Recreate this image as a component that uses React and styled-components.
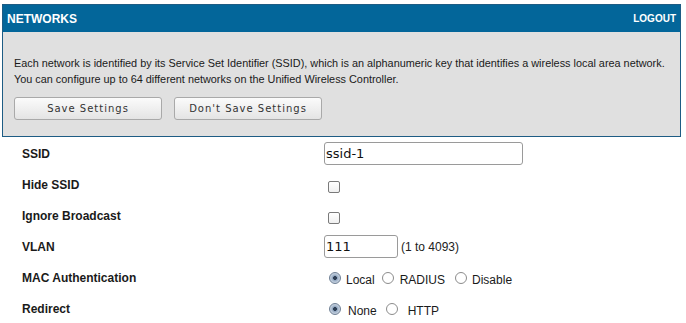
import React from 'react';
import styled, { createGlobalStyle } from 'styled-components';

const GlobalStyle = createGlobalStyle`
  body {
    margin: 0;
    background: #ffffff;
    font-family: "Liberation Sans", Arial, sans-serif;
    color: #1e1e1e;
  }
`;

const Page = styled.div`
  width: 686px;
  padding: 4px 5px 0 2px;
  box-sizing: border-box;
`;

const Panel = styled.section`
  border: 1px solid #1d5c84;
  background: #e0e0e0;
`;

const PanelHeader = styled.header`
  height: 27px;
  background: #03669a;
  color: #ffffff;
  display: flex;
  align-items: center;
  justify-content: space-between;
  padding: 0 4px 0 4px;
  font-weight: bold;
`;

const PanelTitle = styled.h1`
  margin: 0;
  font-size: 12px;
  font-weight: bold;
`;

const Logout = styled.a`
  font-size: 10px;
  color: #ffffff;
  text-decoration: none;
`;

const PanelBody = styled.div`
  padding: 23px 11px 16px 11px;
`;

const Intro = styled.p`
  margin: 0 0 10px 0;
  font-size: 10.87px;
  line-height: 16px;
  white-space: nowrap;
  color: #1a1a1a;
`;

const Buttons = styled.div`
  display: flex;
  gap: 12px;
`;

const Button = styled.button`
  width: 148px;
  height: 23px;
  border: 1px solid #a9a9a9;
  border-radius: 3px;
  background: linear-gradient(#fbfbfb, #e4e4e4);
  font-family: "DejaVu Sans", Verdana, sans-serif;
  font-size: 10px;
  letter-spacing: 1px;
  color: #333333;
  padding: 0;
`;

const Form = styled.div`
  display: grid;
  grid-template-columns: 302px 1fr;
  grid-auto-rows: 31px;
  padding: 1px 0 0 20px;
`;

const Label = styled.div`
  display: flex;
  align-items: center;
  font-size: 12px;
  font-weight: bold;
  color: #1a1a1a;
`;

const Control = styled.div`
  display: flex;
  align-items: center;
  font-size: 12px;
`;

const TextInput = styled.input`
  width: ${p => p.$width}px;
  height: 23px;
  box-sizing: border-box;
  margin: 0;
  padding: 0 1px;
  border: 1px solid #9a9a9a;
  border-radius: 3px;
  font-family: "DejaVu Sans", Verdana, sans-serif;
  font-size: 13px;
  color: #111111;
  background: #ffffff;
  outline: none;
`;

const Hint = styled.span`
  margin-left: 3px;
  font-size: 12px;
  color: #222222;
`;

const Checkbox = styled.input.attrs({ type: 'checkbox' })`
  appearance: none;
  width: 12px;
  height: 12px;
  margin: 4px 0 0 4px;
  border: 1px solid #7a7a7a;
  border-radius: 2px;
  background: linear-gradient(#ffffff, #f0f0f0);
`;

const RadioGroup = styled.div`
  display: flex;
  align-items: center;
  padding-left: 5px;
`;

const Option = styled.label`
  display: flex;
  align-items: center;
  font-size: 12px;
  color: #1a1a1a;
  gap: ${p => p.$gap}px;
  margin-left: ${p => p.$offset || 0}px;
`;

const OptionText = styled.span`
  margin-top: 4px;
`;

const Radio = styled.input.attrs({ type: 'radio' })`
  appearance: none;
  width: 12px;
  height: 12px;
  margin: 0;
  border-radius: 50%;
  border: 1px solid #8c8c8c;
  background: #ffffff;
  &:checked {
    border-color: #6e7f94;
    background: radial-gradient(circle, #2f3f55 0 1.6px, #8ea3bd 2.2px, #b9c7d8 4px, #d6dee8 6px);
  }
`;

export default function App() {
  return (
    <>
      <GlobalStyle />
      <Page>
        <Panel>
          <PanelHeader>
            <PanelTitle>NETWORKS</PanelTitle>
            <Logout href="#">LOGOUT</Logout>
          </PanelHeader>
          <PanelBody>
            <Intro>
              Each network is identified by its Service Set Identifier (SSID), which is an alphanumeric key that identifies a wireless local area network.
              <br />
              You can configure up to 64 different networks on the Unified Wireless Controller.
            </Intro>
            <Buttons>
              <Button>Save Settings</Button>
              <Button>Don't Save Settings</Button>
            </Buttons>
          </PanelBody>
        </Panel>
        <Form>
          <Label>SSID</Label>
          <Control>
            <TextInput $width={199} defaultValue="ssid-1" />
          </Control>
          <Label>Hide SSID</Label>
          <Control>
            <Checkbox />
          </Control>
          <Label>Ignore Broadcast</Label>
          <Control>
            <Checkbox />
          </Control>
          <Label>VLAN</Label>
          <Control>
            <TextInput $width={74} defaultValue="111" />
            <Hint>(1 to 4093)</Hint>
          </Control>
          <Label>MAC Authentication</Label>
          <Control>
            <RadioGroup>
              <Option $gap={5}><Radio name="mac" defaultChecked /><OptionText>Local</OptionText></Option>
              <Option $gap={6} $offset={7}><Radio name="mac" /><OptionText>RADIUS</OptionText></Option>
              <Option $gap={5} $offset={10}><Radio name="mac" /><OptionText>Disable</OptionText></Option>
            </RadioGroup>
          </Control>
          <Label>Redirect</Label>
          <Control>
            <RadioGroup>
              <Option $gap={7}><Radio name="redir" defaultChecked /><OptionText>None</OptionText></Option>
              <Option $gap={10} $offset={9}><Radio name="redir" /><OptionText>HTTP</OptionText></Option>
            </RadioGroup>
          </Control>
        </Form>
      </Page>
    </>
  );
}
